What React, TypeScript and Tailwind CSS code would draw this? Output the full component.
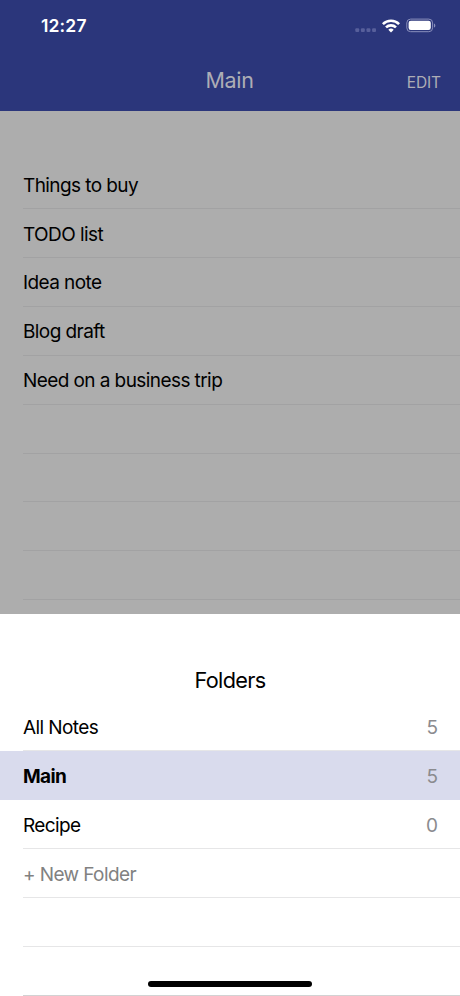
const notes = ["Things to buy", "TODO list", "Idea note", "Blog draft", "Need on a business trip", "", "", "", ""];

const folders = [
  { name: "All Notes", count: "5" },
  { name: "Main", count: "5", active: true },
  { name: "Recipe", count: "0" },
  { name: "+ New Folder", muted: true },
  { name: "" },
  { name: "" },
];

function StatusIcons() {
  return (
    <svg width="82" height="18" viewBox="0 0 82 18" fill="none" aria-hidden="true">
      <g fill="#575f9b">
        <rect x="0.3" y="11.3" width="3.9" height="3.8" rx="1" />
        <rect x="5.9" y="11.3" width="3.9" height="3.8" rx="1" />
        <rect x="11.5" y="11.3" width="3.9" height="3.8" rx="1" />
        <rect x="17.1" y="11.3" width="3.9" height="3.8" rx="1" />
      </g>
      <g stroke="#fff" strokeWidth="2.6">
        <path d="M27.9 7.1a11.6 11.6 0 0 1 16.2 0" />
        <path d="M31 10.4a7.2 7.2 0 0 1 10 0" />
      </g>
      <path d="M33.3 12.8a3.9 3.9 0 0 1 5.4 0L36 15.5z" fill="#fff" />
      <rect x="51.8" y="2.1" width="25.8" height="12.6" rx="3.8" stroke="#8b90bd" />
      <rect x="53.6" y="3.8" width="22.2" height="9.2" rx="2.2" fill="#fff" />
      <path d="M79 6.4c1.8.6 1.8 3.6 0 4.2z" fill="#8b90bd" />
    </svg>
  );
}

export default function App() {
  return (
    <main className="relative flex h-[996px] w-[460px] flex-col overflow-hidden bg-[#adadad] font-['Inter',sans-serif] text-black">
      <header className="h-[111px] shrink-0 bg-[#2b367b]">
        <div className="flex h-[52px] items-center justify-between pr-[23px] pl-[41px]">
          <span className="text-[17.5px] leading-6 font-semibold tracking-[0.15px] text-white">12:27</span>
          <StatusIcons />
        </div>
        <div className="grid h-[58px] grid-cols-3 items-center pr-[19px] pl-[18px]">
          <span />
          <h1 className="pb-[2px] text-center text-[21.5px] leading-7 font-normal tracking-[-0.3px] text-[#adadb5]">Main</h1>
          <button className="pt-[3px] text-right text-[15.5px] leading-6 tracking-[-0.1px] text-[#adadb5]">EDIT</button>
        </div>
      </header>
      <ul className="h-[502.5px] shrink-0 pt-[49.5px]">
        {notes.map((note, i) => (
          <li key={i} className="ml-[23px] flex h-[48.85px] items-center border-b border-[#a2a2a3] pt-[3px] text-[19px] tracking-[-0.58px]">
            {note}
          </li>
        ))}
      </ul>
      <section className="grow bg-white">
        <h2 className="flex h-[89px] items-end justify-center pb-[9px] text-[21.7px] leading-7 font-normal tracking-[-0.68px]">Folders</h2>
        <ul>
          {folders.map((folder, i) => (
            <li key={i} className={`h-[48.85px] pl-[23px] text-[19px] ${folder.active ? "bg-[#d9dbed] font-bold" : ""}`}>
              <div
                className={`flex h-full items-center justify-between border-b pt-[4px] pr-[22px] tracking-[-0.6px] ${
                  i === 1 ? "border-transparent" : i === 5 ? "border-[#d2d2d3]" : "border-[#e6e6e7]"
                } ${folder.muted ? "text-[#818181]" : ""}`}
              >
                <span>{folder.name}</span>
                <span className="font-normal tracking-normal text-[#8b8b8f]">{folder.count}</span>
              </div>
            </li>
          ))}
        </ul>
      </section>
      <div className="absolute bottom-[9px] left-[148px] h-[6px] w-[164px] rounded-full bg-black" />
    </main>
  );
}
